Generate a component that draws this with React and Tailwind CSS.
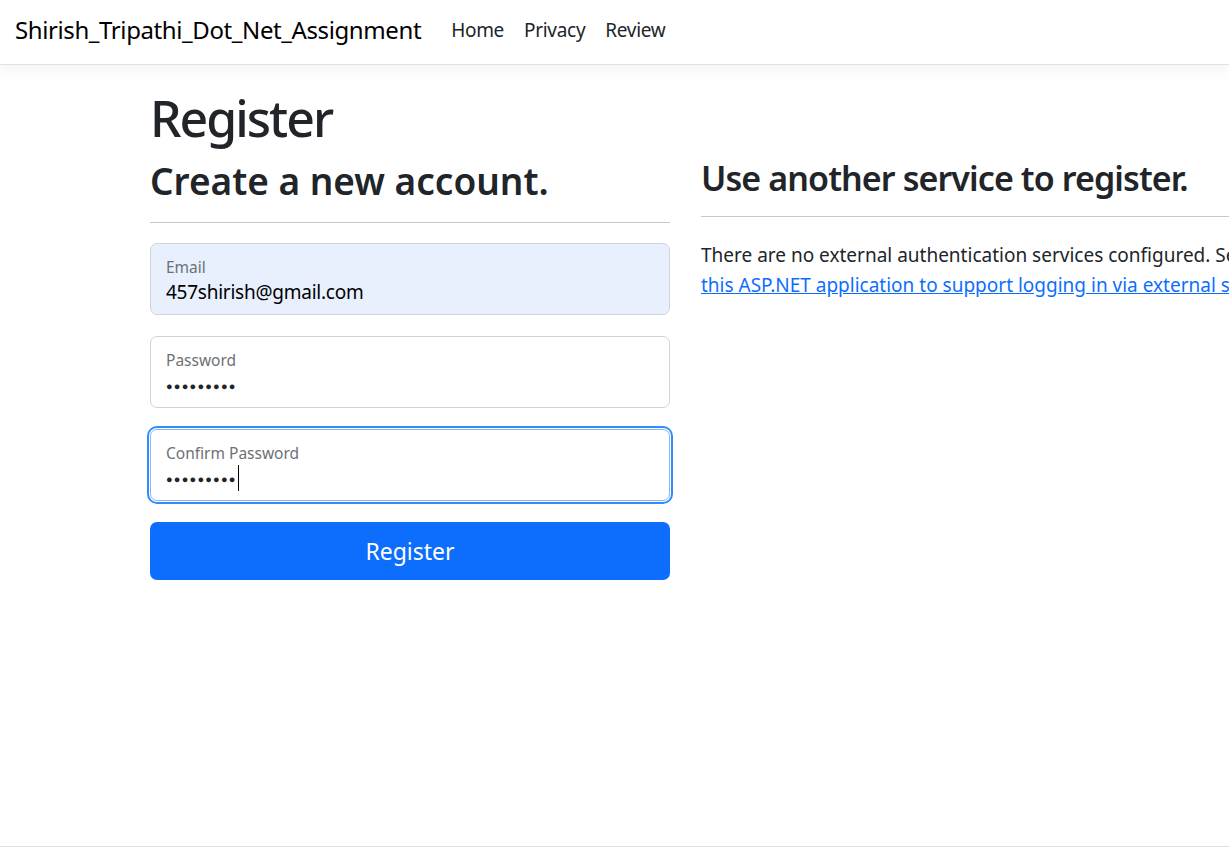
import React from "react";

const font = "font-['Segoe_UI','Noto_Sans',sans-serif]";

function FloatingField({ label, value, autofill, focused, password }) {
  let box =
    "relative w-[520px] h-[72px] rounded-[7px] border px-[15px] flex flex-col justify-start";
  if (autofill) box += " bg-[#e8f0fe] border-[#ced4da]";
  else if (focused)
    box +=
      " bg-white border-[#86b7fe] shadow-[0_0_0_1px_#ffffff,0_0_0_3px_#2f8cf8]";
  else box += " bg-white border-[#ced4da]";

  return (
    <div className={box}>
      <div className="pt-[11px] text-[15.5px] leading-[24px] text-[#6c7175]">{label}</div>
      {password ? (
        <div className="flex items-center h-[26px]">
          <span className="text-[11px] tracking-[1.2px] text-[#212529] leading-none">
            {value}
          </span>
          {focused && <span className="w-px h-[26px] bg-[#000] ml-[1px]" />}
        </div>
      ) : (
        <div className="text-[19px] tracking-[-0.25px] leading-[26px] text-black">{value}</div>
      )}
    </div>
  );
}

export default function App() {
  return (
    <div className={`h-[861px] w-[1229px] overflow-hidden bg-white flex flex-col text-[#212529] ${font}`}>
      {/* navbar */}
      <header className="h-[65px] shrink-0 border-b border-[#dee2e6] shadow-[0_5px_15px_rgba(0,0,0,0.05)] flex items-center px-[15px] pb-[4px] relative z-10 bg-white">
        <a className="text-[24px] tracking-[-0.4px] text-black mr-[20px] leading-none">
          Shirish_Tripathi_Dot_Net_Assignment
        </a>
        <nav className="flex">
          <a className="px-[10px] text-[19px] tracking-[-0.3px] text-[#212529] leading-none">Home</a>
          <a className="px-[10px] text-[19px] tracking-[-0.3px] text-[#212529] leading-none">Privacy</a>
          <a className="px-[10px] text-[19px] tracking-[-0.3px] text-[#212529] leading-none">Review</a>
        </nav>
      </header>

      {/* content */}
      <main className="flex-1 flex pl-[150px] pt-[23px]">
        <section className="w-[520px] shrink-0">
          <h1 className="text-[50px] tracking-[-2px] font-medium leading-[60px] mb-[12px]">Register</h1>
          <h3 className="text-[37px] font-semibold leading-[42px]">Create a new account.</h3>
          <hr className="mt-[20px] mb-[20px] border-t border-[#c8c9ca]" />
          <div className="flex flex-col gap-[21px]">
            <FloatingField label="Email" value="457shirish@gmail.com" autofill />
            <FloatingField label="Password" value="●●●●●●●●●" password />
            <FloatingField label="Confirm Password" value="●●●●●●●●●" password focused />
          </div>
          <button className="mt-[21px] w-[520px] h-[58px] rounded-[7px] bg-[#0d6efd] text-white text-[23px] leading-none">
            Register
          </button>
        </section>

        <section className="ml-[31px] w-[620px] shrink-0 pt-[69px]">
          <h3 className="text-[34px] tracking-[-0.9px] font-semibold leading-[42px]">Use another service to register.</h3>
          <hr className="mt-[17px] mb-[23px] border-t border-[#c8c9ca]" />
          <p className="text-[19px] leading-[30px] whitespace-nowrap">
            There are no external authentication services configured. See{" "}
            <a className="text-[#0d6efd] underline">
              this article about setting up
              <br />
              this ASP.NET application to support logging in via external services
            </a>
            .
          </p>
        </section>
      </main>

      {/* footer */}
      <footer className="h-[15px] shrink-0 border-t border-[#dee2e6]" />
    </div>
  );
}
